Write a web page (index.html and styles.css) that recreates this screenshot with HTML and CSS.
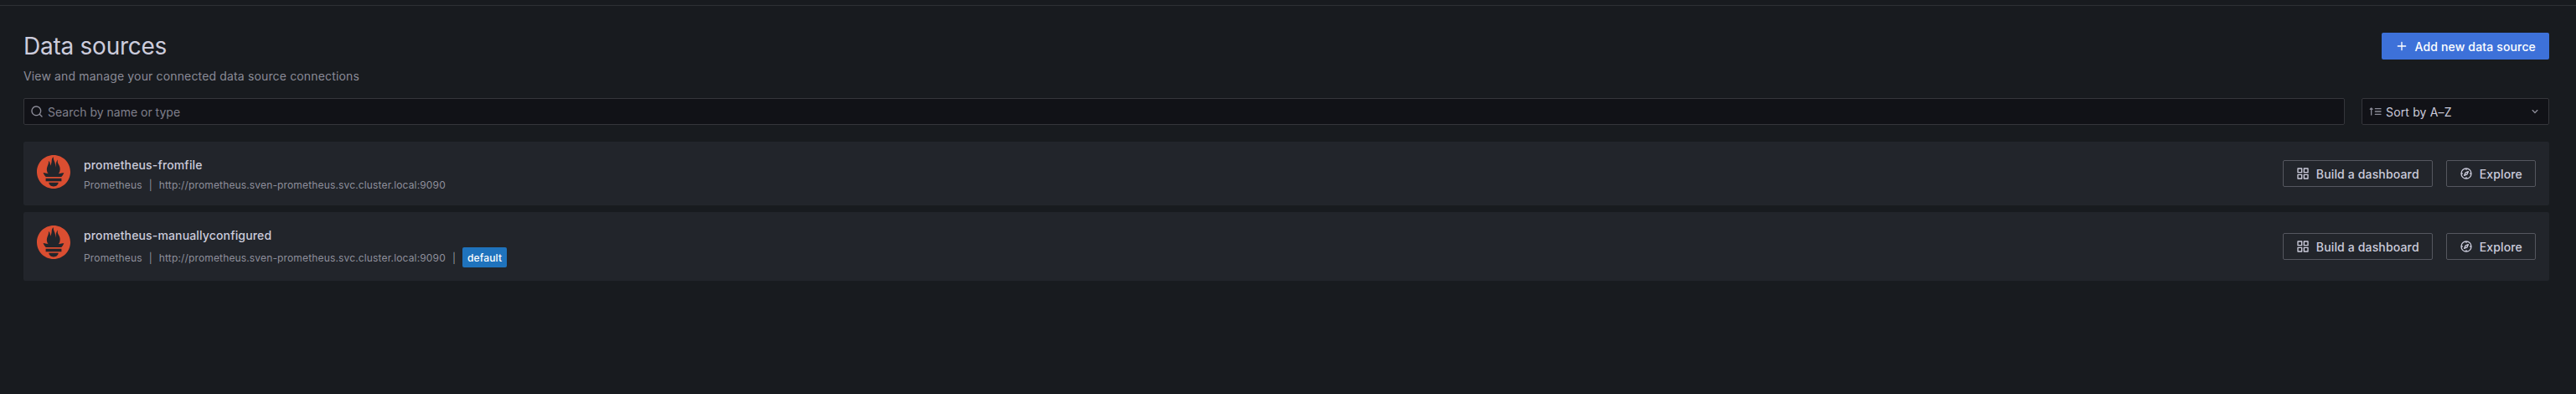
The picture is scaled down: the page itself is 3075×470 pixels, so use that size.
FILE: index.html
```html
<!DOCTYPE html>
<html lang="en">
<head>
<meta charset="utf-8">
<title>Data sources</title>
<link rel="stylesheet" href="styles.css">
</head>
<body>
<svg class="sprite" aria-hidden="true">
  <symbol id="plus" viewBox="0 0 24 24"><path d="M19,11H13V5a1,1,0,0,0-2,0v6H5a1,1,0,0,0,0,2h6v6a1,1,0,0,0,2,0V13h6a1,1,0,0,0,0-2Z"/></symbol>
  <symbol id="search" viewBox="0 0 24 24"><path d="M21.71,20.29,18,16.61A9,9,0,1,0,16.61,18l3.68,3.68a1,1,0,0,0,1.42,0A1,1,0,0,0,21.71,20.29ZM11,18a7,7,0,1,1,7-7A7,7,0,0,1,11,18Z"/></symbol>
  <symbol id="sort" viewBox="0 0 24 24"><path d="M6.71,7.29l-2-2a1,1,0,0,0-.33-.21,1,1,0,0,0-.76,0,1,1,0,0,0-.33.21l-2,2A1,1,0,0,0,2.71,8.71L3,8.41V18a1,1,0,0,0,2,0V8.41l.29.3a1,1,0,0,0,1.42,0A1,1,0,0,0,6.71,7.29ZM11,8H21a1,1,0,0,0,0-2H11a1,1,0,0,0,0,2Zm10,3H11a1,1,0,0,0,0,2H21a1,1,0,0,0,0-2Zm0,5H11a1,1,0,0,0,0,2H21a1,1,0,0,0,0-2Z"/></symbol>
  <symbol id="angle-down" viewBox="0 0 24 24"><path d="M17,9.17a1,1,0,0,0-1.41,0L12,12.71,8.46,9.17a1,1,0,0,0-1.41,0,1,1,0,0,0,0,1.42l4.24,4.24a1,1,0,0,0,1.42,0L17,10.59A1,1,0,0,0,17,9.17Z"/></symbol>
  <symbol id="apps" viewBox="0 0 24 24"><path d="M10,13H3a1,1,0,0,0-1,1v7a1,1,0,0,0,1,1h7a1,1,0,0,0,1-1V14A1,1,0,0,0,10,13ZM9,20H4V15H9ZM21,2H14a1,1,0,0,0-1,1v7a1,1,0,0,0,1,1h7a1,1,0,0,0,1-1V3A1,1,0,0,0,21,2ZM20,9H15V4h5Zm1,4H14a1,1,0,0,0-1,1v7a1,1,0,0,0,1,1h7a1,1,0,0,0,1-1V14A1,1,0,0,0,21,13Zm-1,7H15V15h5ZM10,2H3A1,1,0,0,0,2,3v7a1,1,0,0,0,1,1h7a1,1,0,0,0,1-1V3A1,1,0,0,0,10,2ZM9,9H4V4H9Z"/></symbol>
  <symbol id="compass" viewBox="0 0 24 24"><path d="M12,2A10,10,0,1,0,22,12,10,10,0,0,0,12,2Zm1,17.93V19a1,1,0,0,0-2,0v.93A8,8,0,0,1,4.07,13H5a1,1,0,0,0,0-2H4.07A8,8,0,0,1,11,4.07V5a1,1,0,0,0,2,0V4.07A8,8,0,0,1,19.93,11H19a1,1,0,0,0,0,2h.93A8,8,0,0,1,13,19.93ZM15.14,7.55l-5,2.12a1,1,0,0,0-.52.52l-2.12,5a1,1,0,0,0,.21,1.1,1,1,0,0,0,.7.29.93.93,0,0,0,.4-.08l5-2.12a1,1,0,0,0,.52-.52l2.12-5a1,1,0,0,0-1.31-1.31Zm-2.49,5.1-2.28,1,1-2.28,2.28-1Z"/></symbol>
  <symbol id="prometheus" viewBox="0 0 24 24"><path d="M12 0C5.373 0 0 5.372 0 12c0 6.627 5.373 12 12 12s12-5.373 12-12c0-6.628-5.373-12-12-12zm0 22.46c-1.885 0-3.414-1.26-3.414-2.814h6.828c0 1.553-1.528 2.813-3.414 2.813zm5.64-3.745H6.36v-2.046h11.28v2.046zm-.04-3.098H6.391c-.037-.043-.075-.086-.111-.13-1.155-1.401-1.427-2.133-1.69-2.879-.005-.025 1.4.287 2.395.511 0 0 .513.119 1.262.255-.72-.843-1.147-1.915-1.147-3.01 0-2.406 1.845-4.508 1.18-6.207.648.053 1.34 1.367 1.387 3.422.689-.951.977-2.69.977-3.755 0-1.103.727-2.385 1.454-2.429-.648 1.069.168 1.984.894 4.256.272.854.237 2.29.447 3.201.07-1.892.395-4.652 1.595-5.605-.529 1.2.079 2.702.494 3.424.671 1.164 1.078 2.047 1.078 3.716a4.642 4.642 0 01-1.11 2.996c.792-.149 1.34-.283 1.34-.283l2.573-.502s-.374 1.538-1.81 3.019z"/></symbol>
</svg>

<div class="topbar"></div>
<main class="page">
  <header class="page-header">
    <div class="title-row">
      <h1 class="title">Data sources</h1>
      <a class="button primary"><svg class="icon"><use href="#plus"/></svg><span>Add new data source</span></a>
    </div>
    <p class="subtitle">View and manage your connected data source connections</p>
  </header>

  <div class="filters">
    <div class="field search"><svg class="icon"><use href="#search"/></svg><span class="placeholder">Search by name or type</span></div>
    <div class="field select"><svg class="icon"><use href="#sort"/></svg><span class="value">Sort by A–Z</span><svg class="icon"><use href="#angle-down"/></svg></div>
  </div>

  <ul class="list">
    <li class="card">
      <svg class="logo"><use href="#prometheus"/></svg>
      <div class="info">
        <h2 class="name">prometheus-fromfile</h2>
        <div class="meta"><span>Prometheus</span><span class="sep">|</span><span>http://prometheus.sven-prometheus.svc.cluster.local:9090</span></div>
      </div>
      <div class="actions">
        <a class="button secondary"><svg class="icon"><use href="#apps"/></svg><span>Build a dashboard</span></a>
        <a class="button secondary"><svg class="icon"><use href="#compass"/></svg><span>Explore</span></a>
      </div>
    </li>
    <li class="card">
      <svg class="logo"><use href="#prometheus"/></svg>
      <div class="info">
        <h2 class="name">prometheus-manuallyconfigured</h2>
        <div class="meta"><span>Prometheus</span><span class="sep">|</span><span>http://prometheus.sven-prometheus.svc.cluster.local:9090</span><span class="sep">|</span><span class="tag">default</span></div>
      </div>
      <div class="actions">
        <a class="button secondary"><svg class="icon"><use href="#apps"/></svg><span>Build a dashboard</span></a>
        <a class="button secondary"><svg class="icon"><use href="#compass"/></svg><span>Explore</span></a>
      </div>
    </li>
  </ul>
</main>
</body>
</html>
```
FILE: styles.css
```css
* { box-sizing: border-box; }

body {
  margin: 0;
  min-height: 100vh;
  background: #181b1f;
  color: rgb(204, 204, 220);
  font: 400 14px/22px Inter, sans-serif;
  letter-spacing: 0.15px;
}

.sprite { display: none; }
.icon { width: 16px; height: 16px; flex: none; fill: currentColor; }

.topbar { height: 7px; border-bottom: 1px solid #2d3035; }
.page { padding: 32px 32px 0 28px; }

.page-header { margin-bottom: 15px; }
.title-row { display: flex; align-items: center; justify-content: space-between; height: 32px; }
.title { margin: 0; font-size: 28px; line-height: 32px; font-weight: 400; letter-spacing: -0.25px; }
.subtitle { margin: 9px 0 0; color: rgba(204, 204, 220, 0.65); }

.button {
  display: flex;
  align-items: center;
  gap: 8px;
  height: 32px;
  border-radius: 2px;
  font-weight: 500;
  white-space: nowrap;
}
.button span, .field span { padding-top: 2px; }
.primary { padding: 0 16px; background: #3d71d9; color: #fff; }
.secondary { padding: 0 15px; border: 1px solid #55575f; }

.filters { display: flex; gap: 20px; margin-bottom: 20px; }
.field {
  display: flex;
  align-items: center;
  height: 32px;
  padding: 0 8px;
  border: 1px solid #35363b;
  border-radius: 2px;
  background: #111217;
}
.field .icon { color: rgba(204, 204, 220, 0.65); }
.search { flex: 1; padding-left: 7px; gap: 5px; }
.placeholder { color: rgba(204, 204, 220, 0.6); letter-spacing: 0; }
.select { width: 224px; gap: 4px; }
.value { flex: 1; }

.list { display: grid; gap: 8px; margin: 0; padding: 0; list-style: none; }
.card {
  display: flex;
  gap: 16px;
  padding: 16px;
  border-radius: 2px;
  background: #22252b;
}
.logo { width: 40px; height: 40px; flex: none; fill: #da4e31; }
.info { flex: 1; }
.name { margin: 0; padding-top: 1px; font-size: 14px; line-height: 21px; font-weight: 500; }
.meta {
  display: flex;
  align-items: center;
  margin-top: 4px;
  color: rgba(204, 204, 220, 0.65);
  font-size: 12px;
  line-height: 17px;
}
.meta span { padding-top: 1px; }
.sep { margin: 0 8px; }
.meta .tag {
  padding: 4px 6px 3px;
  border-radius: 2px;
  background: #1f73bd;
  color: #fff;
  font-weight: 500;
}
.actions { display: flex; align-items: center; gap: 16px; }
```
